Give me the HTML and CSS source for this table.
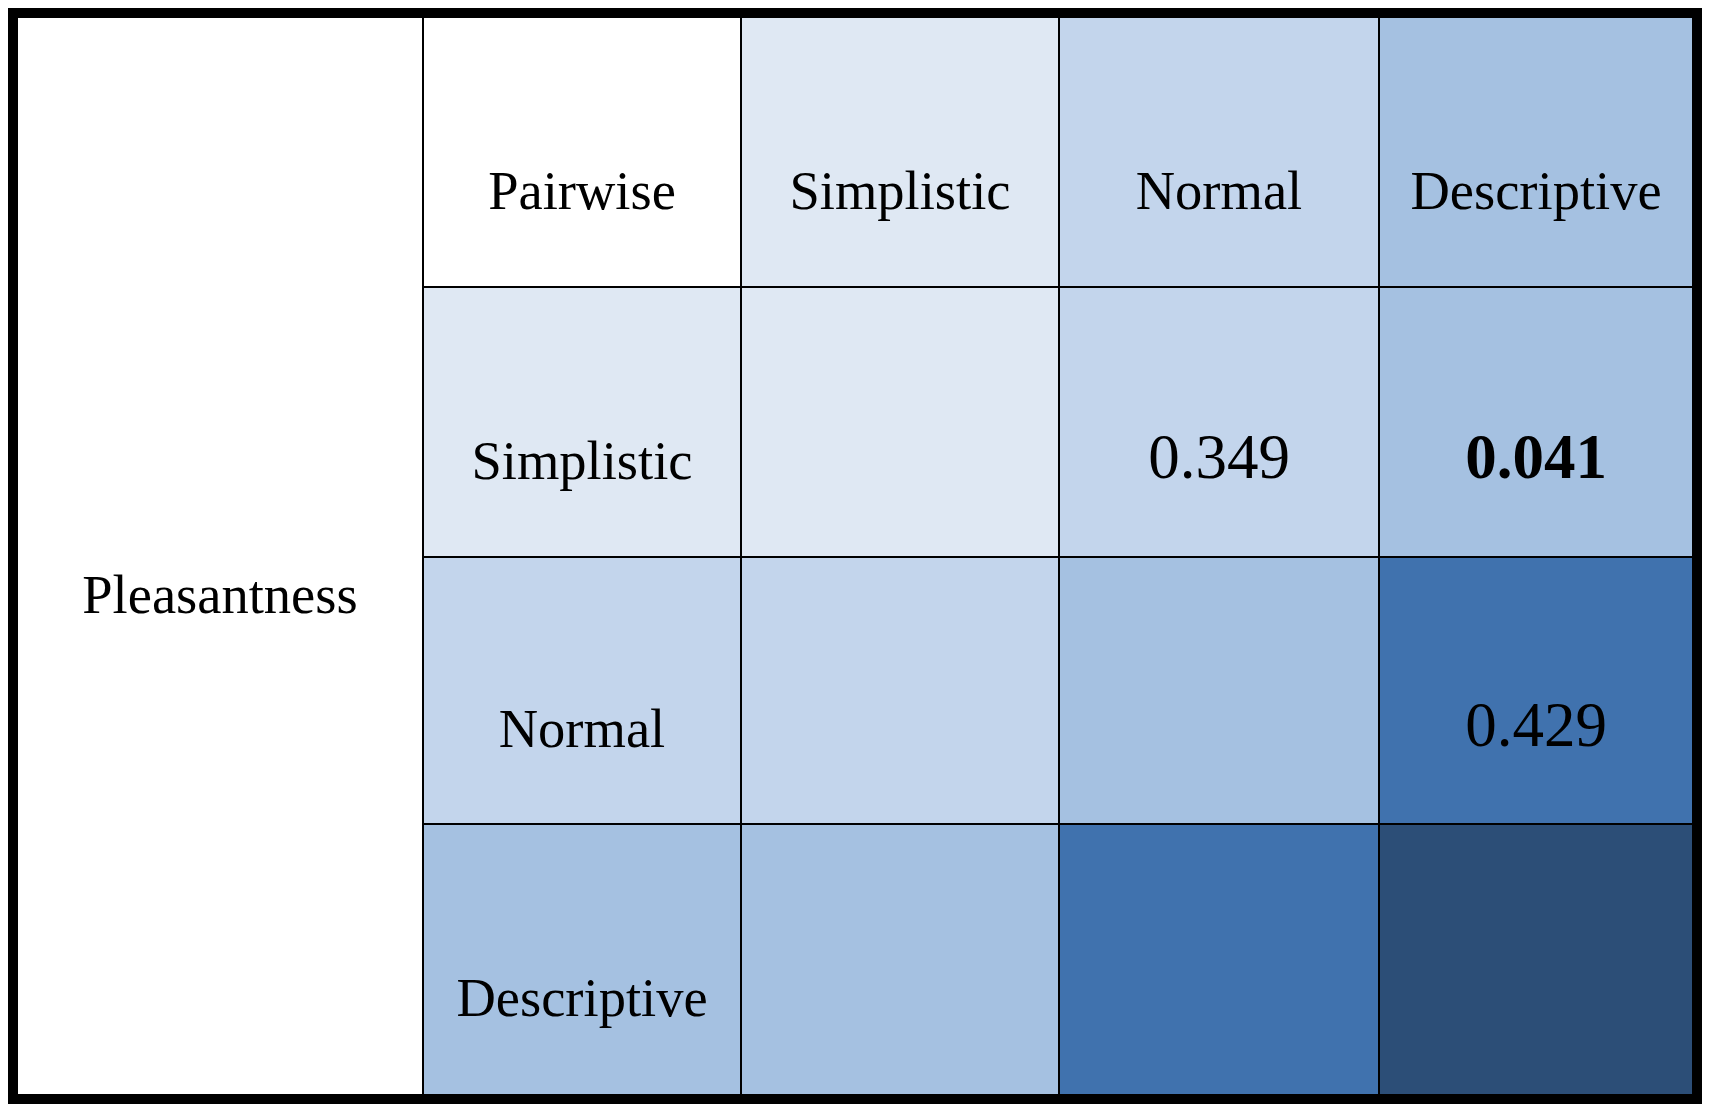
FILE: index.html
```html
<!DOCTYPE html>
<html lang="en">
<head>
<meta charset="utf-8">
<title>Pleasantness pairwise</title>
<link rel="stylesheet" href="styles.css">
</head>
<body>
<div class="matrix">
  <div class="cell label-col">Pleasantness</div>
  <div class="cell c-white">Pairwise</div>
  <div class="cell c-1">Simplistic</div>
  <div class="cell c-2">Normal</div>
  <div class="cell c-3">Descriptive</div>

  <div class="cell c-1">Simplistic</div>
  <div class="cell c-1"></div>
  <div class="cell c-2 num">0.349</div>
  <div class="cell c-3 num bold">0.041</div>

  <div class="cell c-2">Normal</div>
  <div class="cell c-2"></div>
  <div class="cell c-3"></div>
  <div class="cell c-4 num">0.429</div>

  <div class="cell c-3">Descriptive</div>
  <div class="cell c-3"></div>
  <div class="cell c-4"></div>
  <div class="cell c-5"></div>
</div>
</body>
</html>
```
FILE: styles.css
```css
html, body {
  margin: 0;
  padding: 0;
  background: #ffffff;
}
body {
  padding: 8px;
  font-family: "Liberation Serif", "Times New Roman", serif;
  color: #000000;
}
.matrix {
  width: 1674px;
  border: 10px solid #000000;
  background: #000000;
  display: grid;
  grid-template-columns: 404px 316px 316px 318px 312px;
  grid-template-rows: 268px 268px 265px 269px;
  gap: 2px;
}
.cell {
  display: flex;
  align-items: center;
  justify-content: center;
  padding-top: 76px;
  font-size: 54.5px;
  line-height: normal;
  box-sizing: border-box;
}
.label-col {
  grid-row: span 4;
  background: #ffffff;
}
.num {
  font-size: 63px;
  padding-top: 70px;
}
.bold {
  font-weight: bold;
}
.c-white { background: #ffffff; }
.c-1 { background: #dfe8f3; }
.c-2 { background: #c3d5ec; }
.c-3 { background: #a5c1e1; }
.c-4 { background: #4072ae; }
.c-5 { background: #2c4e77; }
```
